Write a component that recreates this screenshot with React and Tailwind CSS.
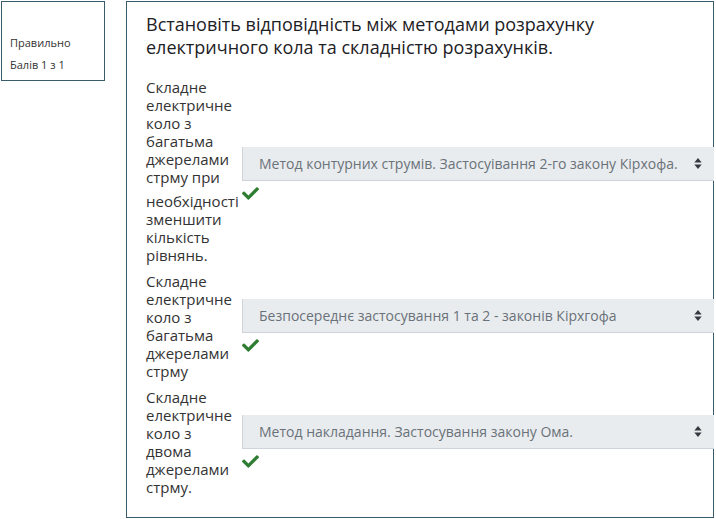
import React from 'react';

const rows = [
    {
        lines: ['Складне', 'електричне', 'коло з', 'багатьма', 'джерелами', 'стрму при', 'необхідності', 'зменшити', 'кількість', 'рівнянь.'],
        gapAt: 6,
        shift: true,
        answer: 'Метод контурних струмів. Застосуівання 2-го закону Кірхофа.',
    },
    {
        lines: ['Складне', 'електричне', 'коло з', 'багатьма', 'джерелами', 'стрму'],
        answer: 'Безпосереднє застосування 1 та 2 - законів Кірхгофа',
    },
    {
        lines: ['Складне', 'електричне', 'коло з', 'двома', 'джерелами', 'стрму.'],
        answer: 'Метод накладання. Застосування закону Ома.',
    },
];

function Check() {
    return (
        <svg viewBox="0 0 512 512" className="w-[21px] h-[17px] -ml-[2px] text-[#2e7d32]" fill="currentColor">
            <path d="M173.898 439.404l-166.4-166.4c-9.997-9.997-9.997-26.206 0-36.204l36.203-36.204c9.997-9.998 26.207-9.998 36.204 0L192 312.69 432.095 72.596c9.997-9.997 26.207-9.997 36.204 0l36.203 36.204c9.997 9.997 9.997 26.206 0 36.204l-294.4 294.401c-9.998 9.997-26.207 9.997-36.204-.001z" />
        </svg>
    );
}

function Arrows() {
    return (
        <svg viewBox="0 0 8 12" className="w-[8px] h-[11px] text-[#343a40]" fill="currentColor">
            <path d="M4 0 L8 5 H0 Z" />
            <path d="M4 12 L0 7 H8 Z" />
        </svg>
    );
}

export default function App() {
    return (
        <div className="min-h-screen bg-white flex items-start pt-[1px] pl-[1px] gap-[21px] font-['Open_Sans',sans-serif]">
            {/* Info box */}
            <div className="w-[104px] h-[80px] border border-[#3a5b6b] flex flex-col justify-end pb-[4px] pl-[8px] text-[11px] text-[#333] leading-[22px]">
                <div>Правильно</div>
                <div>Балів 1 з 1</div>
            </div>

            {/* Question */}
            <div className="w-[588px] h-[517px] border border-[#3a5b6b] pl-[19px] pt-[11px]">
                <h2 className="text-[18px] leading-[23px] text-[#1d2125] font-normal">
                    Встановіть відповідність між методами розрахунку<br />
                    електричного кола та складністю розрахунків.
                </h2>

                <div className="mt-[19px] flex flex-col gap-[8px]">
                    {rows.map((row, i) => (
                        <div key={i} className="flex items-center">
                            <div className="w-[96px] shrink-0 text-[15px] leading-[18px] text-[#333]">
                                {row.lines.map((line, j) => (
                                    <div key={j} className={j === row.gapAt ? 'mt-[6px]' : ''}>
                                        {line}
                                    </div>
                                ))}
                            </div>
                            <div className={`flex flex-col gap-[4px] ${row.shift ? 'mt-[6px]' : ''}`}>
                                <div className="w-[472px] h-[34px] bg-[#e9ecef] border border-[#ced4da] border-r-0 border-t-0 flex items-center justify-between pl-[16px] pr-[12px] text-[14px] text-[#6a7279]">
                                    <span className="whitespace-nowrap">{row.answer}</span>
                                    <Arrows />
                                </div>
                                <Check />
                            </div>
                        </div>
                    ))}
                </div>
            </div>
        </div>
    );
}
